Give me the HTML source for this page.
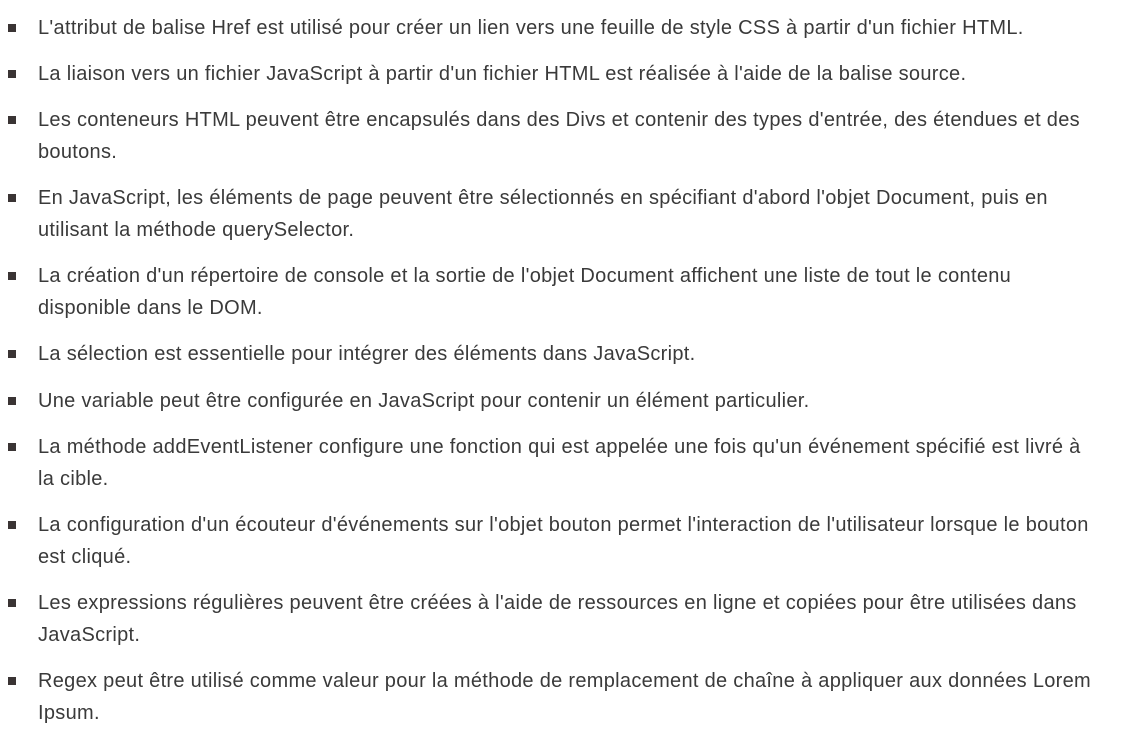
<!DOCTYPE html>
<html><head><meta charset="utf-8"><style>
body{margin:0;background:#fff;width:1132px;height:720px;overflow:hidden;font-family:"Liberation Sans",sans-serif;font-size:20px;letter-spacing:0.3px;color:#3a3a3a}
ul{list-style:none;margin:0;padding:12px 0 0 38px;width:1075px}
li{position:relative;line-height:32px;margin-bottom:14.1px}
li:before{content:"";position:absolute;left:-30px;top:12px;width:8px;height:8px;background:#3a3434}
</style></head><body><ul>
<li>L'attribut de balise Href est utilisé pour créer un lien vers une feuille de style CSS à partir d'un fichier HTML.</li>
<li>La liaison vers un fichier JavaScript à partir d'un fichier HTML est réalisée à l'aide de la balise source.</li>
<li>Les conteneurs HTML peuvent être encapsulés dans des Divs et contenir des types d'entrée, des étendues et des<br>boutons.</li>
<li>En JavaScript, les éléments de page peuvent être sélectionnés en spécifiant d'abord l'objet Document, puis en<br>utilisant la méthode querySelector.</li>
<li>La création d'un répertoire de console et la sortie de l'objet Document affichent une liste de tout le contenu<br>disponible dans le DOM.</li>
<li>La sélection est essentielle pour intégrer des éléments dans JavaScript.</li>
<li>Une variable peut être configurée en JavaScript pour contenir un élément particulier.</li>
<li>La méthode addEventListener configure une fonction qui est appelée une fois qu'un événement spécifié est livré à<br>la cible.</li>
<li>La configuration d'un écouteur d'événements sur l'objet bouton permet l'interaction de l'utilisateur lorsque le bouton<br>est cliqué.</li>
<li>Les expressions régulières peuvent être créées à l'aide de ressources en ligne et copiées pour être utilisées dans<br>JavaScript.</li>
<li>Regex peut être utilisé comme valeur pour la méthode de remplacement de chaîne à appliquer aux données Lorem<br>Ipsum.</li>
</ul></body></html>
